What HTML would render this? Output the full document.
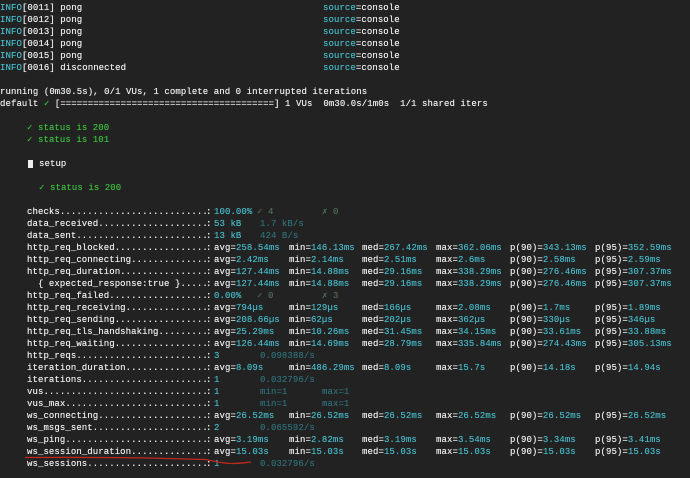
<!DOCTYPE html>
<html><head><meta charset="utf-8"><style>
body{margin:0;width:690px;height:478px;overflow:hidden;background:#222222;font-family:"Liberation Mono","DejaVu Sans Mono",monospace;font-size:9px;letter-spacing:0.08px;color:#ececec;position:relative;text-shadow:0 0 0.4px currentColor}
.r{position:absolute;left:0;height:12px;line-height:12px;white-space:pre;width:690px}
.r span{position:absolute;white-space:pre}
.n{left:27px;width:179px;overflow:hidden}
.co{left:206px}
.c{color:#45b4c2}
.d{color:#2f6c74}
.g{color:#3cb83c}
.dg{color:#4d6a55}
i{font-style:normal}
.a{left:214px}.b{left:289px}.m{left:362px}.x{left:436px}.p{left:510px}.q{left:595px}
.s{left:260px}.t{left:322px}
</style></head><body>
<div class="r" style="top:-10px"><span style="left:0"><i class="c">INFO</i>[0010] pong</span><span style="left:323px"><i class="c">source</i>=console</span></div>
<div class="r" style="top:2px"><span style="left:0"><i class="c">INFO</i>[0011] pong</span><span style="left:323px"><i class="c">source</i>=console</span></div>
<div class="r" style="top:14px"><span style="left:0"><i class="c">INFO</i>[0012] pong</span><span style="left:323px"><i class="c">source</i>=console</span></div>
<div class="r" style="top:26px"><span style="left:0"><i class="c">INFO</i>[0013] pong</span><span style="left:323px"><i class="c">source</i>=console</span></div>
<div class="r" style="top:38px"><span style="left:0"><i class="c">INFO</i>[0014] pong</span><span style="left:323px"><i class="c">source</i>=console</span></div>
<div class="r" style="top:50px"><span style="left:0"><i class="c">INFO</i>[0015] pong</span><span style="left:323px"><i class="c">source</i>=console</span></div>
<div class="r" style="top:62px"><span style="left:0"><i class="c">INFO</i>[0016] disconnected</span><span style="left:323px"><i class="c">source</i>=console</span></div>
<div class="r" style="top:86px"><span style="left:0">running (0m30.5s), 0/1 VUs, 1 complete and 0 interrupted iterations</span></div>
<div class="r" style="top:98px"><span style="left:0">default <i class="g">✓</i> [=======================================] 1 VUs  0m30.0s/1m0s  1/1 shared iters</span></div>
<div class="r g" style="top:122px"><span style="left:27px">✓ status is 200</span></div>
<div class="r g" style="top:134px"><span style="left:27px">✓ status is 101</span></div>
<div class="r" style="top:158px"><span style="left:28px;top:2px;width:5px;height:8px;background:#eee"></span><span style="left:39px">setup</span></div>
<div class="r g" style="top:182px"><span style="left:39px">✓ status is 200</span></div>

<div class="r" style="top:206px"><span class="n">checks.............................................</span><span class="co">:</span><span class="a c">100.00%</span><span style="left:257px" class="dg">✓ 4</span><span style="left:322px" class="dg">✗ 0</span></div>
<div class="r" style="top:218px"><span class="n">data_received......................................</span><span class="co">:</span><span class="a c">53 kB</span><span class="s d">1.7 kB/s</span></div>
<div class="r" style="top:230px"><span class="n">data_sent..........................................</span><span class="co">:</span><span class="a c">13 kB</span><span class="s d">424 B/s</span></div>
<div class="r" style="top:242px"><span class="n">http_req_blocked...................................</span><span class="co">:</span><span class="a">avg=<i class="c">258.54ms</i></span><span class="b">min=<i class="c">146.13ms</i></span><span class="m">med=<i class="c">267.42ms</i></span><span class="x">max=<i class="c">362.06ms</i></span><span class="p">p(90)=<i class="c">343.13ms</i></span><span class="q">p(95)=<i class="c">352.59ms</i></span></div>
<div class="r" style="top:254px"><span class="n">http_req_connecting................................</span><span class="co">:</span><span class="a">avg=<i class="c">2.42ms</i></span><span class="b">min=<i class="c">2.14ms</i></span><span class="m">med=<i class="c">2.51ms</i></span><span class="x">max=<i class="c">2.6ms</i></span><span class="p">p(90)=<i class="c">2.58ms</i></span><span class="q">p(95)=<i class="c">2.59ms</i></span></div>
<div class="r" style="top:266px"><span class="n">http_req_duration..................................</span><span class="co">:</span><span class="a">avg=<i class="c">127.44ms</i></span><span class="b">min=<i class="c">14.88ms</i></span><span class="m">med=<i class="c">29.16ms</i></span><span class="x">max=<i class="c">338.29ms</i></span><span class="p">p(90)=<i class="c">276.46ms</i></span><span class="q">p(95)=<i class="c">307.37ms</i></span></div>
<div class="r" style="top:278px"><span class="n">  { expected_response:true }.......................</span><span class="co">:</span><span class="a">avg=<i class="c">127.44ms</i></span><span class="b">min=<i class="c">14.88ms</i></span><span class="m">med=<i class="c">29.16ms</i></span><span class="x">max=<i class="c">338.29ms</i></span><span class="p">p(90)=<i class="c">276.46ms</i></span><span class="q">p(95)=<i class="c">307.37ms</i></span></div>
<div class="r" style="top:290px"><span class="n">http_req_failed....................................</span><span class="co">:</span><span class="a c">0.00%</span><span style="left:257px" class="dg">✓ 0</span><span style="left:322px" class="dg">✗ 3</span></div>
<div class="r" style="top:302px"><span class="n">http_req_receiving.................................</span><span class="co">:</span><span class="a">avg=<i class="c">794µs</i></span><span class="b">min=<i class="c">129µs</i></span><span class="m">med=<i class="c">166µs</i></span><span class="x">max=<i class="c">2.08ms</i></span><span class="p">p(90)=<i class="c">1.7ms</i></span><span class="q">p(95)=<i class="c">1.89ms</i></span></div>
<div class="r" style="top:314px"><span class="n">http_req_sending...................................</span><span class="co">:</span><span class="a">avg=<i class="c">208.66µs</i></span><span class="b">min=<i class="c">62µs</i></span><span class="m">med=<i class="c">202µs</i></span><span class="x">max=<i class="c">362µs</i></span><span class="p">p(90)=<i class="c">330µs</i></span><span class="q">p(95)=<i class="c">346µs</i></span></div>
<div class="r" style="top:326px"><span class="n">http_req_tls_handshaking...........................</span><span class="co">:</span><span class="a">avg=<i class="c">25.29ms</i></span><span class="b">min=<i class="c">10.26ms</i></span><span class="m">med=<i class="c">31.45ms</i></span><span class="x">max=<i class="c">34.15ms</i></span><span class="p">p(90)=<i class="c">33.61ms</i></span><span class="q">p(95)=<i class="c">33.88ms</i></span></div>
<div class="r" style="top:338px"><span class="n">http_req_waiting...................................</span><span class="co">:</span><span class="a">avg=<i class="c">126.44ms</i></span><span class="b">min=<i class="c">14.69ms</i></span><span class="m">med=<i class="c">28.79ms</i></span><span class="x">max=<i class="c">335.84ms</i></span><span class="p">p(90)=<i class="c">274.43ms</i></span><span class="q">p(95)=<i class="c">305.13ms</i></span></div>
<div class="r" style="top:350px"><span class="n">http_reqs..........................................</span><span class="co">:</span><span class="a c">3</span><span class="s d">0.098388/s</span></div>
<div class="r" style="top:362px"><span class="n">iteration_duration.................................</span><span class="co">:</span><span class="a">avg=<i class="c">8.09s</i></span><span class="b">min=<i class="c">486.29ms</i></span><span class="m">med=<i class="c">8.09s</i></span><span class="x">max=<i class="c">15.7s</i></span><span class="p">p(90)=<i class="c">14.18s</i></span><span class="q">p(95)=<i class="c">14.94s</i></span></div>
<div class="r" style="top:374px"><span class="n">iterations.........................................</span><span class="co">:</span><span class="a c">1</span><span class="s d">0.032796/s</span></div>
<div class="r" style="top:386px"><span class="n">vus................................................</span><span class="co">:</span><span class="a c">1</span><span class="s d">min=1</span><span class="t d">max=1</span></div>
<div class="r" style="top:398px"><span class="n">vus_max............................................</span><span class="co">:</span><span class="a c">1</span><span class="s d">min=1</span><span class="t d">max=1</span></div>
<div class="r" style="top:410px"><span class="n">ws_connecting......................................</span><span class="co">:</span><span class="a">avg=<i class="c">26.52ms</i></span><span class="b">min=<i class="c">26.52ms</i></span><span class="m">med=<i class="c">26.52ms</i></span><span class="x">max=<i class="c">26.52ms</i></span><span class="p">p(90)=<i class="c">26.52ms</i></span><span class="q">p(95)=<i class="c">26.52ms</i></span></div>
<div class="r" style="top:422px"><span class="n">ws_msgs_sent.......................................</span><span class="co">:</span><span class="a c">2</span><span class="s d">0.065592/s</span></div>
<div class="r" style="top:434px"><span class="n">ws_ping............................................</span><span class="co">:</span><span class="a">avg=<i class="c">3.19ms</i></span><span class="b">min=<i class="c">2.82ms</i></span><span class="m">med=<i class="c">3.19ms</i></span><span class="x">max=<i class="c">3.54ms</i></span><span class="p">p(90)=<i class="c">3.34ms</i></span><span class="q">p(95)=<i class="c">3.41ms</i></span></div>
<div class="r" style="top:446px"><span class="n">ws_session_duration................................</span><span class="co">:</span><span class="a">avg=<i class="c">15.03s</i></span><span class="b">min=<i class="c">15.03s</i></span><span class="m">med=<i class="c">15.03s</i></span><span class="x">max=<i class="c">15.03s</i></span><span class="p">p(90)=<i class="c">15.03s</i></span><span class="q">p(95)=<i class="c">15.03s</i></span></div>
<div class="r" style="top:458px"><span class="n">ws_sessions........................................</span><span class="co">:</span><span class="a c">1</span><span class="s d">0.032796/s</span></div>
<svg style="position:absolute;left:0;top:0" width="690" height="478"><path d="M25 457.5 C90 457, 160 458, 205 459.5 C215 461, 222 463.5, 232 463.5 C240 463.5, 246 462.5, 251 462" stroke="#c0281e" stroke-width="1.3" fill="none"/></svg>
</body></html>
